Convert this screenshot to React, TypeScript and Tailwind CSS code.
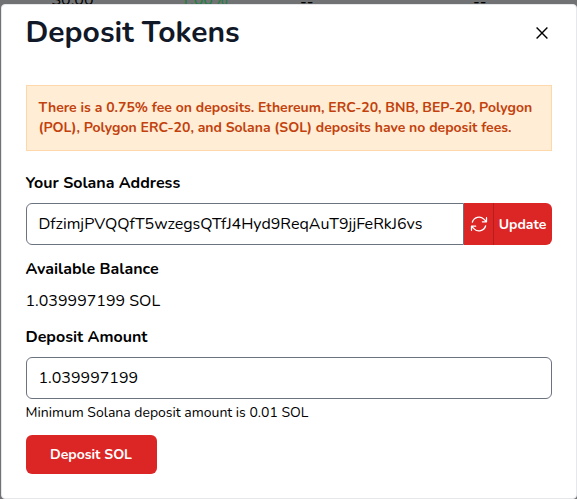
import React from "react";

function RefreshIcon() {
  return (
    <svg width="20" height="20" viewBox="0 0 24 24" fill="none" stroke="currentColor" strokeWidth="1.5" strokeLinecap="round" strokeLinejoin="round">
      <path d="M16.023 9.348h4.992v-.001M2.985 19.644v-4.992m0 0h4.992m-4.993 0l3.181 3.183a8.25 8.25 0 0013.803-3.7M4.031 9.865a8.25 8.25 0 0113.803-3.7l3.181 3.182m0-4.991v4.99" />
    </svg>
  );
}

function CloseIcon() {
  return (
    <svg width="12" height="12" viewBox="0 0 12 12" fill="none" stroke="currentColor" strokeWidth="1.4">
      <path d="M.6 .6l10.8 10.8M11.4 .6L.6 11.4" />
    </svg>
  );
}

function PageBehind() {
  return (
    <div className="flex h-1 overflow-hidden text-[16px] leading-[20px] text-black">
      <span className="-mt-[10px] ml-[51.5px] w-[129px] shrink-0">$0.00</span>
      <span className="-mt-[10px] w-[119.5px] shrink-0 text-[#17803c]">1.00%</span>
      <span className="-mt-[8px] w-[173px] shrink-0">--</span>
      <span className="-mt-[8px] shrink-0">--</span>
    </div>
  );
}

export default function App() {
  return (
    <div className="h-[499px] w-[577px] overflow-hidden bg-[#717274] font-[Nunito,Lato,sans-serif] text-black">
      <PageBehind />
      <div className="ml-px flex h-[495px] flex-col rounded-[4px] border border-[#e5e7eb] bg-white pl-6 pr-6">
        <div className="flex h-[80px] items-start justify-between">
          <h2 className="-ml-[0.5px] mt-[10px] whitespace-nowrap text-[30px] font-bold leading-[36px] text-[#111827]">Deposit Tokens</h2>
          <button className="mr-[4px] mt-[22px]" aria-label="Close"><CloseIcon /></button>
        </div>
        <div className="h-[66px] shrink-0 whitespace-nowrap border border-[#fed7aa] bg-[#ffedd5] px-[11.5px] pt-3 text-[14px] font-bold leading-[20px] text-[#c2410c]">
          <p>There is a 0.75% fee on deposits. Ethereum, ERC-20, BNB, BEP-20, Polygon</p>
          <p>(POL), Polygon ERC-20, and Solana (SOL) deposits have no deposit fees.</p>
        </div>
        <label className="-ml-[0.5px] mt-5 h-[32px] text-[16px] font-bold leading-[24px]">Your Solana Address</label>
        <div className="flex h-[42px] shrink-0">
          <div className="flex w-[438px] items-center rounded-l-[6px] border border-[#6b7280] pl-[11.5px] text-[16px]">DfzimjPVQQfT5wzegsQTfJ4Hyd9ReqAuT9jjFeRkJ6vs</div>
          <button className="flex flex-1 overflow-hidden rounded-r-[6px] bg-[#dc2626] text-white">
            <span className="flex h-full w-[30px] items-center justify-center border-r border-[#b91c1c]"><RefreshIcon /></span>
            <span className="flex h-full flex-1 items-center justify-center pr-px text-[14px] font-bold">Update</span>
          </button>
        </div>
        <h3 className="-ml-[0.5px] mt-3 h-[32px] text-[16px] font-bold leading-[24px]">Available Balance</h3>
        <p className="-ml-[0.5px] h-[36px] text-[16px] leading-[24px]">1.039997199 SOL</p>
        <label className="-ml-[0.5px] h-[32px] text-[16px] font-bold leading-[24px]">Deposit Amount</label>
        <div className="flex h-[42px] shrink-0 items-center rounded-[6px] border border-[#6b7280] pl-[11.5px] text-[16px]">1.039997199</div>
        <p className="-ml-[0.5px] mt-[4px] h-[32px] text-[14px] leading-[20px]">Minimum Solana deposit amount is 0.01 SOL</p>
        <button className="h-[39px] w-[131px] shrink-0 rounded-[6px] bg-[#dc2626] pr-px text-[14px] font-bold text-white">Deposit SOL</button>
      </div>
    </div>
  );
}
